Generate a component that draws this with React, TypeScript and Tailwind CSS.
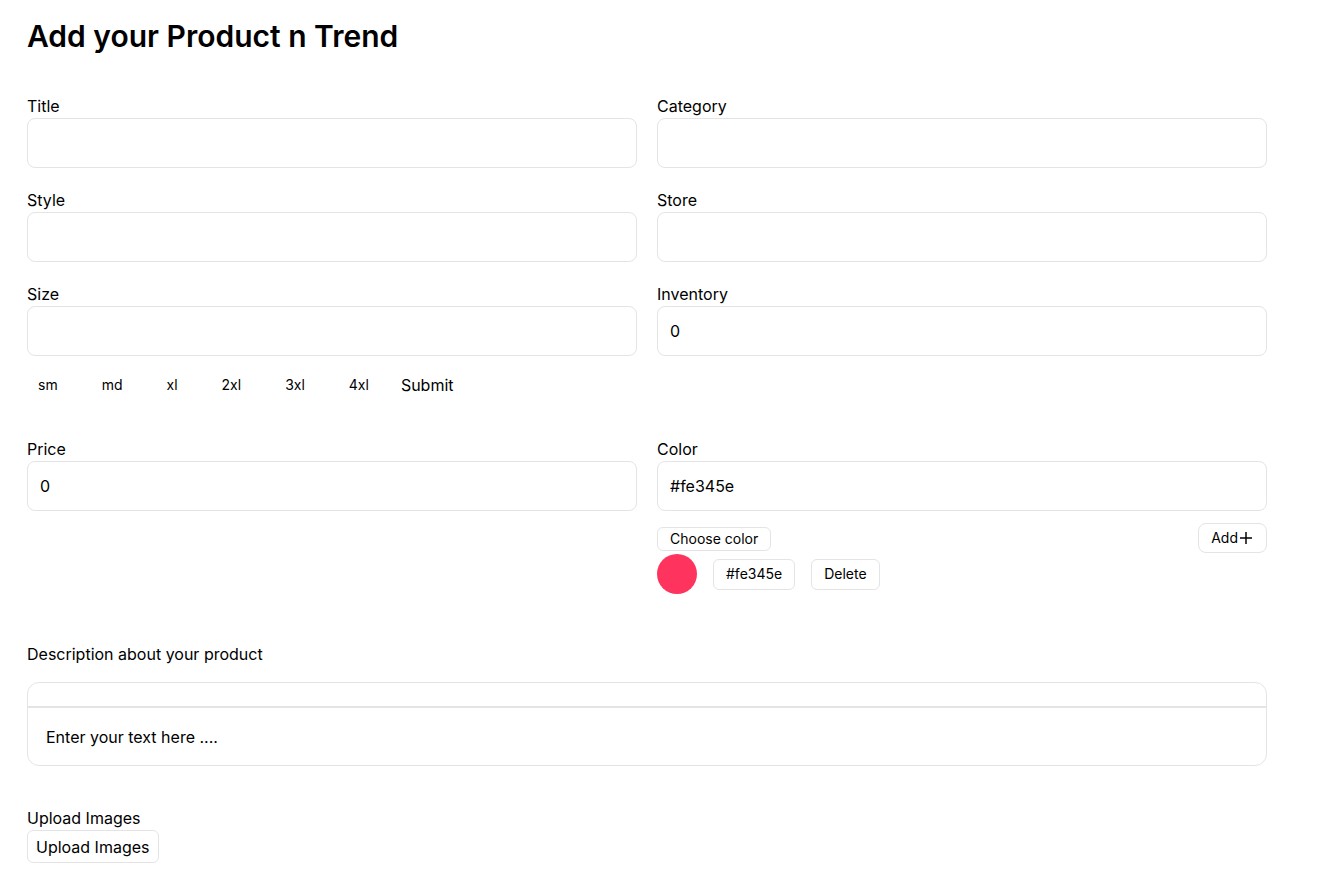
import { useState } from "react";

const sizes = ["sm", "md", "xl", "2xl", "3xl", "4xl"];

function Field({ label, value = "" }: { label: string; value?: string }) {
  return (
    <div className="flex flex-col">
      <label className="text-base leading-6 text-black">{label}</label>
      <input
        defaultValue={value}
        className="h-[50px] w-full rounded-lg border border-[#e4e4e7] px-3 text-base text-black outline-none"
      />
    </div>
  );
}

export default function App() {
  const [color] = useState("#fe345e");

  return (
    <div className="min-h-screen bg-white text-black font-['Inter',sans-serif]">
      <div className="w-[1240px] ml-[27px] pt-[18px] pb-8">
        <h1 className="text-[30px] leading-9 font-semibold">Add your Product n Trend</h1>

        <div className="mt-[40px] grid grid-cols-2 gap-x-5 gap-y-5">
          <Field label="Title" />
          <Field label="Category" />
          <Field label="Style" />
          <Field label="Store" />
          <div>
            <Field label="Size" />
            <div className="flex items-center mt-[17px] h-[24px]">
              <div className="flex gap-[22px]">
                {sizes.map((s) => (
                  <button key={s} className="px-[11px] text-sm text-black">
                    {s}
                  </button>
                ))}
              </div>
              <button className="ml-[21px] text-base text-black">Submit</button>
            </div>
          </div>
          <Field label="Inventory" value="0" />

          <div className="mt-[20px]">
            <Field label="Price" value="0" />
          </div>
          <div className="mt-[20px]">
            <Field label="Color" value={color} />
            <div className="flex items-start justify-between mt-[12px]">
              <div className="flex flex-col">
                <button className="mt-[4px] self-start h-[24px] px-3 rounded-md border border-[#e4e4e7] text-sm leading-none">
                  Choose color
                </button>
                <div className="flex items-center gap-4 mt-[3px]">
                  <div className="w-10 h-10 rounded-full bg-[#fe345e]" />
                  <span className="h-[31px] px-3 flex items-center rounded-md border border-[#e4e4e7] text-sm">
                    {color}
                  </span>
                  <button className="h-[31px] px-3 rounded-md border border-[#e4e4e7] text-sm">Delete</button>
                </div>
              </div>
              <button className="h-[30px] px-3 rounded-lg border border-[#e4e4e7] text-sm flex items-center">
                Add
                <svg className="w-4 h-4" viewBox="0 0 24 24" fill="none" stroke="currentColor" strokeWidth={2.2}>
                  <path d="M12 3v18M3 12h18" />
                </svg>
              </button>
            </div>
          </div>
        </div>

        <div className="mt-[48px]">
          <p className="text-base leading-6">Description about your product</p>
          <div className="mt-[16px] rounded-xl border border-[#e4e4e7] overflow-hidden">
            <div className="h-[25px] border-b-2 border-[#e4e4e7]" />
            <div className="h-[57px] px-[18px] flex items-center text-base">Enter your text here ....</div>
          </div>
        </div>

        <div className="mt-[40px]">
          <p className="text-base leading-6">Upload Images</p>
          <button className="h-[33px] px-2 rounded-md border border-[#e4e4e7] text-base">Upload Images</button>
        </div>
      </div>
    </div>
  );
}
